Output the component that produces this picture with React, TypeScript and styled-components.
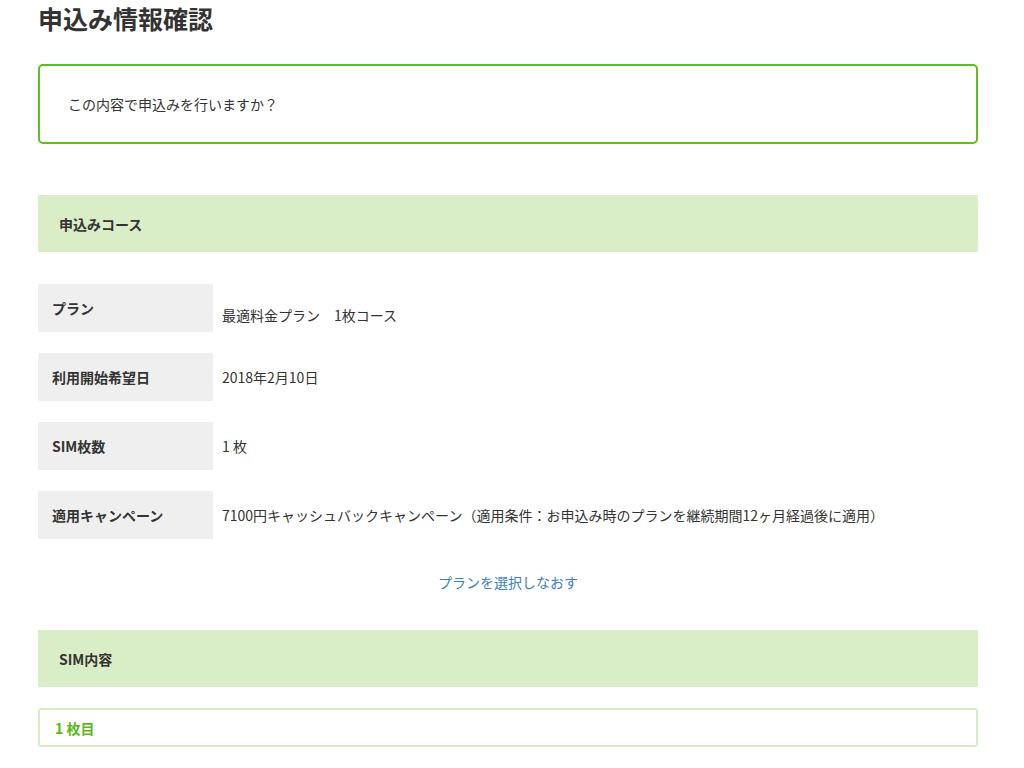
import React from "react";
import styled, { createGlobalStyle } from "styled-components";

const GlobalStyle = createGlobalStyle`
  body {
    margin: 0;
    background: #fff;
    color: #333;
    font-family: "Noto Sans CJK JP", "Noto Sans", sans-serif;
  }
`;

const Wrapper = styled.main`
  width: 940px;
  margin-left: 38px;
`;

const Title = styled.h1`
  margin: 0;
  padding-top: 1px;
  font-size: 25px;
  line-height: 35px;
  font-weight: bold;
  color: #333;
`;

const Notice = styled.div`
  margin-top: 28px;
  height: 80px;
  box-sizing: border-box;
  border: 2px solid #5fbd1c;
  border-radius: 5px;
  display: flex;
  align-items: center;
  padding-left: 28px;
  font-size: 14px;
`;

interface SectionProps {
  top: number;
}

const SectionHeader = styled.h2`
  margin: ${(props: SectionProps) => props.top}px 0 0;
  height: 57px;
  display: flex;
  align-items: center;
  padding-left: 21px;
  background-color: #d9edc6;
  font-size: 14px;
  font-weight: bold;
  color: #333;
`;

const Table = styled.div`
  margin-top: 32px;
  display: flex;
  flex-direction: column;
  gap: 21px;
`;

const Row = styled.div`
  display: flex;
  align-items: center;
  gap: 9px;
`;

const Label = styled.div`
  width: 175px;
  height: 48px;
  flex-shrink: 0;
  box-sizing: border-box;
  padding-left: 14px;
  display: flex;
  align-items: center;
  background-color: #efefef;
  font-size: 14px;
  font-weight: bold;
`;

interface ValueProps {
  offset?: number;
}

const Value = styled.div`
  font-size: 14px;
  padding-top: ${(props: ValueProps) => props.offset || 0}px;
`;

const LinkRow = styled.div`
  margin-top: 33px;
  text-align: center;
  font-size: 14px;
`;

const Link = styled.a`
  color: #3a80c6;
  text-decoration: none;
  cursor: pointer;
`;

const Card = styled.div`
  margin-top: 21px;
  height: 39px;
  box-sizing: border-box;
  border: 2px solid #d6ecc2;
  border-radius: 3px;
  display: flex;
  align-items: center;
  padding-left: 15px;
  font-size: 14px;
  font-weight: bold;
  color: #5cb918;
`;

const rows = [
  { label: "プラン", value: "最適料金プラン　1枚コース", offset: 14 },
  { label: "利用開始希望日", value: "2018年2月10日" },
  { label: "SIM枚数", value: "1 枚" },
  {
    label: "適用キャンペーン",
    value:
      "7100円キャッシュバックキャンペーン（適用条件：お申込み時のプランを継続期間12ヶ月経過後に適用）",
  },
];

const App = () => {
  const renderedRows = rows.map((row) => (
    <Row key={row.label}>
      <Label>{row.label}</Label>
      <Value offset={row.offset}>{row.value}</Value>
    </Row>
  ));

  return (
    <Wrapper>
      <GlobalStyle />
      <Title>申込み情報確認</Title>
      <Notice>この内容で申込みを行いますか？</Notice>

      <SectionHeader top={51}>申込みコース</SectionHeader>
      <Table>{renderedRows}</Table>
      <LinkRow>
        <Link>プランを選択しなおす</Link>
      </LinkRow>

      <SectionHeader top={38}>SIM内容</SectionHeader>
      <Card>1 枚目</Card>
    </Wrapper>
  );
};

export default App;
